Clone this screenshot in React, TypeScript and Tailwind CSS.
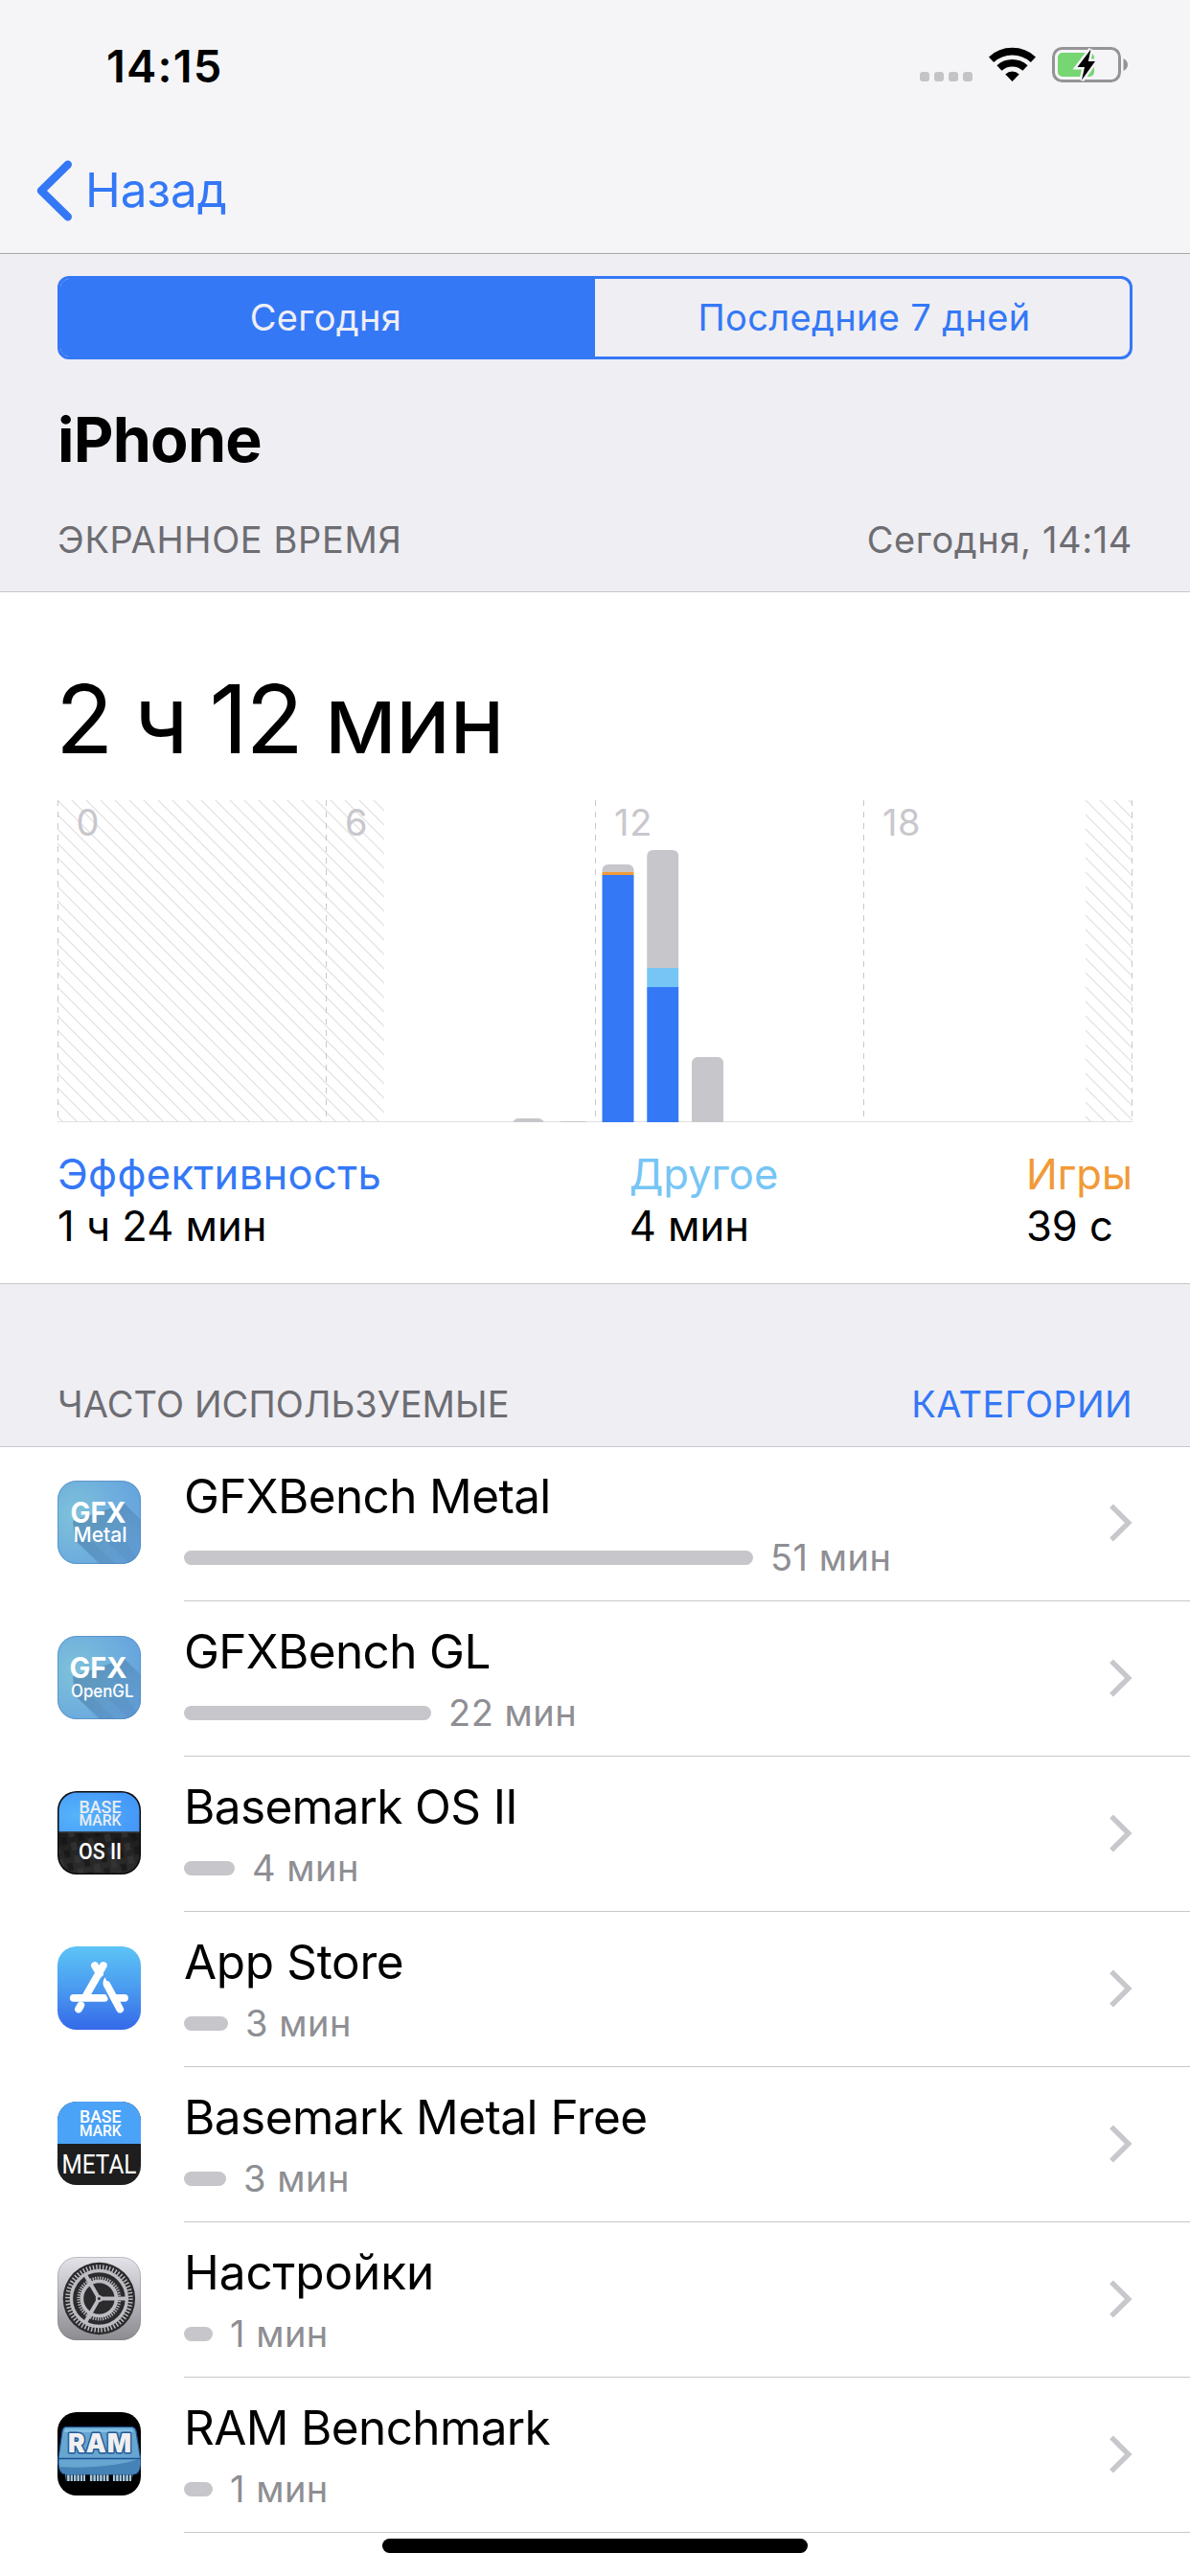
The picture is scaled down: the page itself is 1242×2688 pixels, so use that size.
import type { ReactNode } from 'react'

type AppUsage = {
    name: string
    time: string
    bar: string
    icon: ReactNode
    tracking?: string
}

type Segment = {
    y: number
    height: number
    color: string
}

type HourBar = {
    hour: number
    top: number
    segments: Segment[]
}

const GRAY = '#c7c6cb'
const BLUE = '#3478f6'
const LIGHT_BLUE = '#76c5f5'
const ORANGE = '#f19a37'

const CHART_HEIGHT = 336

const hourBars: HourBar[] = [
    { hour: 10, top: 332, segments: [{ y: 332, height: 4, color: GRAY }] },
    { hour: 11, top: 334.8, segments: [{ y: 334.8, height: 1.2, color: GRAY }] },
    {
        hour: 12,
        top: 67,
        segments: [
            { y: 67, height: 8, color: GRAY },
            { y: 75, height: 3, color: ORANGE },
            { y: 78, height: 258, color: BLUE },
        ],
    },
    {
        hour: 13,
        top: 52,
        segments: [
            { y: 52, height: 123, color: GRAY },
            { y: 175, height: 20, color: LIGHT_BLUE },
            { y: 195, height: 141, color: BLUE },
        ],
    },
    { hour: 14, top: 268, segments: [{ y: 268, height: 68, color: GRAY }] },
]

const categories = [
    { name: 'Эффективность', time: '1 ч 24 мин', color: 'text-[#3478f6]', tracking: 'tracking-[0.32px]' },
    { name: 'Другое', time: '4 мин', color: 'text-[#76c5f5]', tracking: 'tracking-normal' },
    { name: 'Игры', time: '39 с', color: 'text-[#f19a37]', tracking: 'tracking-normal' },
]

function StatusBar() {
    return (
        <div className="flex h-[134px] items-center justify-between pl-[111px] pr-[65px] pt-0.5">
            <span className="text-[47px] font-semibold leading-none tracking-[1.2px]">14:15</span>

            <div className="flex items-center gap-[17px] pb-px">
                <svg width="55" height="37" viewBox="0 0 55 37" fill="#c4c4c6">
                    <rect x="0" y="26" width="10" height="10" rx="3" />
                    <rect x="15" y="26" width="10" height="10" rx="3" />
                    <rect x="30" y="26" width="10" height="10" rx="3" />
                    <rect x="45" y="26" width="10" height="10" rx="3" />
                </svg>

                <svg width="49" height="37" viewBox="0 0 49 37" fill="none" stroke="#000" strokeWidth="7.6">
                    <path d="M2.6 13.2A32.2 32.2 0 0 1 46.4 13.2" />
                    <path d="M11 22A19.8 19.8 0 0 1 38 22" />
                    <path d="M24.5 36L17.3 28.6Q20.5 25.4 24.5 25.4T31.7 28.6Z" fill="#000" stroke="none" />
                </svg>

                <svg width="79" height="37" viewBox="0 0 79 37">
                    <rect x="1.5" y="1.5" width="69" height="34" rx="9" fill="none" stroke="#949496" strokeWidth="3" />
                    <rect x="6" y="6" width="38" height="25" rx="5" fill="#76d672" />
                    <path d="M74.5 12Q79 14.5 79 18.5T74.5 25Z" fill="#949496" />
                    <path
                        d="M40.5 2.5L26.5 21H34L31 34.5L45 15H37.8Z"
                        fill="#000"
                        stroke="#f5f5f7"
                        strokeWidth="5"
                        paintOrder="stroke"
                    />
                </svg>
            </div>
        </div>
    )
}

function NavBar() {
    return (
        <div className="flex h-[130px] items-center gap-[12px] pb-0.5 pl-[38px] text-[#3478f6]">
            <svg
                className="mt-px"
                width="39"
                height="64"
                viewBox="0 0 39 64"
                fill="none"
                stroke="currentColor"
                strokeWidth="8.4"
                strokeLinecap="round"
                strokeLinejoin="round"
            >
                <path d="M32.8 4.7L5 32L32.8 59.3" />
            </svg>
            <span className="text-[49.5px] leading-[60px]">Назад</span>
        </div>
    )
}

function Tabs() {
    return (
        <div className="flex h-[87px] overflow-hidden rounded-[12px] border-[3px] border-[#3478f6] text-[38px] tracking-[0.35px]">
            <div className="flex w-[558px] items-center justify-center bg-[#3478f6] pr-1 text-[#efeef3]">Сегодня</div>
            <div className="flex flex-1 items-center justify-center pl-1 text-[#3478f6]">Последние 7 дней</div>
        </div>
    )
}

function UsageChart() {
    return (
        <svg className="mt-[25px] block" width="1122" height={CHART_HEIGHT} viewBox={`0 0 1122 ${CHART_HEIGHT}`}>
            <defs>
                <pattern id="hatch" width="15" height="15" patternUnits="userSpaceOnUse">
                    <path d="M-2 -2L17 17M-2 13L2 17M13 -2L17 2" stroke="#dfdfe2" strokeWidth="1.2" />
                </pattern>
                {hourBars.map(({ hour, top }) => (
                    <clipPath key={hour} id={`bar-${hour}`}>
                        <rect x={7.5 + hour * 46.75} y={top} width="33" height={CHART_HEIGHT - top + 12} rx="6" />
                    </clipPath>
                ))}
            </defs>

            <rect width="341" height="335" fill="url(#hatch)" />
            <g transform="translate(1073 0)">
                <rect width="49" height="335" fill="url(#hatch)" />
            </g>

            <rect y="335" width="1122" height="1" fill="#e0e0e3" />

            <g stroke="#c8c7cc" strokeDasharray="6 6">
                {[0.5, 280.5, 561.5, 841.5, 1121.5].map((x) => (
                    <line key={x} x1={x} y1="0" x2={x} y2="332" />
                ))}
            </g>

            <g fill="#c8c7cc" fontSize="38">
                <text x="19.5" y="37">0</text>
                <text x="300" y="37">6</text>
                <text x="581" y="37" letterSpacing="0.8">12</text>
                <text x="861" y="37" letterSpacing="0.5">18</text>
            </g>

            {hourBars.map(({ hour, segments }) => (
                <g key={hour} clipPath={`url(#bar-${hour})`}>
                    {segments.map(({ y, height, color }) => (
                        <rect key={y} x={6 + hour * 46.75} y={y} width="35" height={height} fill={color} />
                    ))}
                </g>
            ))}
        </svg>
    )
}

function GfxIcon({ label, size, x, length, titleX, titleLength }: {
    label: string
    size: number
    x: number
    length: number
    titleX: number
    titleLength: number
}) {
    const id = `gfx-${label}`

    return (
        <svg width="87" height="87" viewBox="0 0 87 87">
            <defs>
                <radialGradient id={id} cx="0.22" cy="0.42" r="0.85">
                    <stop offset="0" stopColor="#7fc2d9" />
                    <stop offset="0.5" stopColor="#71b1dd" />
                    <stop offset="1" stopColor="#65a3de" />
                </radialGradient>
                <clipPath id={`${id}-clip`}>
                    <rect width="87" height="87" rx="20" />
                </clipPath>
                <linearGradient id={`${id}-shade`} x1="0.2" y1="0.2" x2="0.9" y2="0.9">
                    <stop offset="0" stopColor="#3f6f9c" stopOpacity="0.5" />
                    <stop offset="1" stopColor="#3f6f9c" stopOpacity="0.1" />
                </linearGradient>
            </defs>
            <g clipPath={`url(#${id}-clip)`}>
                <rect width="87" height="87" fill={`url(#${id})`} />
                <path d="M16 42L70 24L90 44V90H48L18 62Z" fill={`url(#${id}-shade)`} />
                <path d="M18 62L46 90H64L34 62ZM52 64L78 90H90L70 62Z" fill="#3f6f9c" opacity="0.12" />
            </g>
            <rect x="0.5" y="0.5" width="86" height="86" rx="19.5" fill="none" stroke="#4f86b8" opacity="0.6" />
            <g fill="#fff">
                <text x={titleX} y="43.5" fontSize="30" fontWeight="700" textLength={titleLength} lengthAdjust="spacingAndGlyphs">GFX</text>
                <text x={x} y="64.3" fontSize={size} fontWeight="500" textLength={length} lengthAdjust="spacingAndGlyphs">{label}</text>
            </g>
        </svg>
    )
}

function BasemarkOsIcon() {
    return (
        <svg width="87" height="87" viewBox="0 0 87 87" fontFamily="Roboto">
            <defs>
                <clipPath id="os-clip">
                    <rect width="87" height="87" rx="20" />
                </clipPath>
                <clipPath id="os-inner">
                    <rect x="1.5" y="1.5" width="84" height="84" rx="18.5" />
                </clipPath>
                <radialGradient id="os-blue" cx="0.25" cy="0.6" r="0.8">
                    <stop offset="0" stopColor="#56b4fa" />
                    <stop offset="1" stopColor="#4496f8" />
                </radialGradient>
                <linearGradient id="os-dark" x1="0" y1="0" x2="0" y2="1">
                    <stop offset="0" stopColor="#1b1b1b" />
                    <stop offset="1" stopColor="#2e2e2e" />
                </linearGradient>
                <pattern id="carbon" width="18" height="14" patternUnits="userSpaceOnUse" patternTransform="rotate(-14)">
                    <rect width="6" height="8" fill="#3c3c3c" />
                    <rect x="9" y="6" width="6" height="8" fill="#101010" />
                </pattern>
            </defs>
            <g clipPath="url(#os-clip)">
                <rect width="87" height="87" fill="#0a0a0a" />
                <g clipPath="url(#os-inner)">
                    <rect width="87" height="42" fill="url(#os-blue)" />
                    <rect y="42" width="87" height="45" fill="url(#os-dark)" />
                    <rect y="42" width="87" height="45" fill="url(#carbon)" opacity="0.55" />
                    <rect y="42" width="87" height="1.5" fill="#3a3f46" />
                </g>
            </g>
            <g fill="#e9edf2">
                <text x="22.5" y="22.5" fontSize="18" fontWeight="500" textLength="44" lengthAdjust="spacingAndGlyphs">BASE</text>
                <text x="22.5" y="36.3" fontSize="16.5" fontWeight="500" textLength="44" lengthAdjust="spacingAndGlyphs">MARK</text>
                <text x="22" y="71" fontSize="24.5" fontWeight="500" textLength="45" lengthAdjust="spacingAndGlyphs" fill="#fff">OS II</text>
            </g>
        </svg>
    )
}

function BasemarkMetalIcon() {
    return (
        <svg width="87" height="87" viewBox="0 0 87 87" fontFamily="Roboto" fill="#fff">
            <clipPath id="metal-clip">
                <rect width="87" height="87" rx="20" />
            </clipPath>
            <g clipPath="url(#metal-clip)">
                <rect width="87" height="87" fill="#1e1e1e" />
                <rect width="87" height="44" fill="#4ba3f8" />
            </g>
            <text x="23" y="22" fontSize="17.5" fontWeight="500" textLength="43.5" lengthAdjust="spacingAndGlyphs">BASE</text>
            <text x="23" y="35.8" fontSize="16.5" fontWeight="500" textLength="43.5" lengthAdjust="spacingAndGlyphs">MARK</text>
            <text x="4.5" y="75" fontSize="27" textLength="78" lengthAdjust="spacingAndGlyphs">METAL</text>
        </svg>
    )
}

function AppStoreIcon() {
    return (
        <svg width="87" height="87" viewBox="0 0 87 87">
            <defs>
                <linearGradient id="store" x1="0" y1="0" x2="0" y2="1">
                    <stop offset="0" stopColor="#5dc4f6" />
                    <stop offset="0.5" stopColor="#4a9bf0" />
                    <stop offset="1" stopColor="#3569e9" />
                </linearGradient>
            </defs>
            <rect width="87" height="87" rx="20" fill="url(#store)" />
            <g stroke="#fff" strokeWidth="7.8" strokeLinecap="round" fill="none">
                <path d="M47.8 20L29.5 52" />
                <path d="M39 20L44 28.5" />
                <path d="M16.8 53.8H49" />
                <path d="M24.3 61.5L22 65.5" />
                <path d="M51.5 40L65.2 65.5" />
                <path d="M61 53.8H70" />
            </g>
            <path d="M48.8 31Q44.5 36.5 48.5 43L55 43Z" fill="#fff" />
            <path d="M49.5 30.5Q44.8 37 47.6 42.6L53.5 54" fill="none" stroke="#4a9bf0" strokeWidth="1.8" />
        </svg>
    )
}

function SettingsIcon() {
    return (
        <svg width="87" height="87" viewBox="0 0 87 87">
            <defs>
                <linearGradient id="steel" x1="0" y1="0" x2="0" y2="1">
                    <stop offset="0" stopColor="#e4e3e9" />
                    <stop offset="1" stopColor="#8c8b90" />
                </linearGradient>
            </defs>
            <rect width="87" height="87" rx="20" fill="url(#steel)" />
            <rect x="0.5" y="0.5" width="86" height="86" rx="19.5" fill="none" stroke="#77767b" opacity="0.35" />
            <g transform="translate(43.4 43.5)" fill="none">
                <circle r="37.7" fill="#2b2b2d" />
                <circle r="32.8" stroke="#bdbcc1" strokeWidth="5" strokeDasharray="1.45 1.984" />
                <circle r="29" stroke="#bdbcc1" strokeWidth="3.4" />
                <circle r="20.3" stroke="#bdbcc1" strokeWidth="5.4" strokeDasharray="1.2 1.257" />
                <circle r="18" stroke="#bdbcc1" strokeWidth="3.6" />
                <g stroke="#bdbcc1" strokeWidth="4">
                    <path d="M0 0H29" />
                    <path d="M0 0H29" transform="rotate(120)" />
                    <path d="M0 0H29" transform="rotate(240)" />
                </g>
                <circle r="3.6" fill="#bdbcc1" />
                <circle r="1.5" fill="#2b2b2d" />
            </g>
        </svg>
    )
}

function RamIcon() {
    return (
        <svg width="87" height="87" viewBox="0 0 87 87">
            <defs>
                <clipPath id="ram-clip">
                    <rect width="87" height="87" rx="20" />
                </clipPath>
                <pattern id="pins" width="3.4" height="8" patternUnits="userSpaceOnUse">
                    <rect width="2.4" height="8" fill="#a9cfe8" />
                </pattern>
            </defs>
            <g clipPath="url(#ram-clip)">
                <rect width="87" height="87" fill="#000" />
                <path d="M8 64H29V72H9ZM33 64H54V72H33ZM58 64H79L77 72H58Z" fill="url(#pins)" />
                <path d="M9 15.5H77Q81 15.5 82 20L86.5 48V54Q86 65 79 65H9Q2 65 1 54V48L5 20Q6 15.5 9 15.5Z" fill="#67a6d1" stroke="#1f5290" strokeWidth="1.2" />
                <path d="M2 57Q50 60 85.5 49V54Q85 64 79 64.3H9Q3 64 2 57Z" fill="#4582b6" />
                <path d="M8 17.5H78L79 21H7Z" fill="#84bfe3" />
                <path d="M1 48.5H86" stroke="#1f5290" strokeWidth="1.3" />
            </g>
            <text
                x="11"
                y="41.5"
                fontSize="26.5"
                fontWeight="900"
                textLength="66"
                fill="#f0f0f0"
                stroke="#225a98"
                strokeWidth="3"
                strokeLinejoin="round"
                paintOrder="stroke"
            >
                RAM
            </text>
        </svg>
    )
}

const apps: AppUsage[] = [
    {
        name: 'GFXBench Metal',
        time: '51 мин',
        bar: 'w-[594px]',
        icon: <GfxIcon label="Metal" size={21.5} x={16.5} length={56} titleX={13.5} titleLength={58} />,
    },
    {
        name: 'GFXBench GL',
        time: '22 мин',
        bar: 'w-[258px]',
        icon: <GfxIcon label="OpenGL" size={18} x={14} length={65.5} titleX={12.5} titleLength={60} />,
    },
    { name: 'Basemark OS II', time: '4 мин', bar: 'w-[53px]', icon: <BasemarkOsIcon /> },
    { name: 'App Store', time: '3 мин', bar: 'w-[46px]', icon: <AppStoreIcon />, tracking: 'tracking-[-0.35px]' },
    { name: 'Basemark Metal Free', time: '3 мин', bar: 'w-[44px]', icon: <BasemarkMetalIcon />, tracking: 'tracking-[-0.54px]' },
    { name: 'Настройки', time: '1 мин', bar: 'w-[30px]', icon: <SettingsIcon />, tracking: 'tracking-[-0.1px]' },
    { name: 'RAM Benchmark', time: '1 мин', bar: 'w-[30px]', icon: <RamIcon /> },
]

function AppRow({ name, time, bar, icon, tracking = 'tracking-[-0.64px]' }: AppUsage) {
    return (
        <li className="flex h-[162px] pl-[60px] first:-mt-px">
            <div className="w-[132px] shrink-0 pt-[36px]">{icon}</div>

            <div className="flex flex-1 items-center justify-between border-b border-[#c8c7cc] pr-[60px]">
                <div className="h-full pt-[22px]">
                    <div className={`text-[49.5px] leading-[60px] ${tracking}`}>{name}</div>
                    <div className="mt-3 flex h-[45px] items-center gap-[18px]">
                        <div className={`h-[15px] rounded-full bg-[#c7c6cb] ${bar}`} />
                        <span className="text-[38px] leading-[45px] tracking-[0.5px] text-[#8e8e93]">{time}</span>
                    </div>
                </div>

                <svg className="mb-0.5" width="24" height="40" viewBox="0 0 24 40" fill="none" stroke="#c7c7cc" strokeWidth="5.4">
                    <path d="M2 2.3L19.8 20L2 37.7" />
                </svg>
            </div>
        </li>
    )
}

export default function App() {
    return (
        <div className="h-[2688px] w-[1242px] overflow-hidden bg-white font-[Inter,sans-serif] text-black">
            <header className="border-b border-[#a8a8ab] bg-[#f5f5f7]">
                <StatusBar />
                <NavBar />
            </header>

            <section className="bg-[#efeef3] px-[60px] pb-[29px] pt-[23px]">
                <Tabs />
                <h1 className="mt-[44px] text-[64.5px] font-bold leading-[81px] tracking-[-0.77px]">iPhone</h1>
                <div className="mt-[38px] flex justify-between text-[38px] leading-[50px] tracking-[0.62px] text-[#6d6d72]">
                    <span>ЭКРАННОЕ ВРЕМЯ</span>
                    <span>Сегодня, 14:14</span>
                </div>
            </section>

            <section className="border-y border-[#c8c7cc] px-[60px] pb-[33px] pt-[72px]">
                <div className="-ml-0.5 text-[99px] leading-[120px] tracking-[-2.2px] [word-spacing:-2px]">2 ч 12 мин</div>
                <UsageChart />

                <div className="mt-[27px] flex justify-between text-[43.5px] leading-[54px]">
                    {categories.map(({ name, time, color, tracking }) => (
                        <div key={name}>
                            <div className={`${color} ${tracking}`}>{name}</div>
                            <div>{time}</div>
                        </div>
                    ))}
                </div>
            </section>

            <section className="flex justify-between bg-[#efeef3] px-[60px] pb-[19px] pt-[100px] text-[38px] leading-[50px]">
                <span className="tracking-[0.08px] text-[#6d6d72]">ЧАСТО ИСПОЛЬЗУЕМЫЕ</span>
                <span className="tracking-[0.37px] text-[#3478f6]">КАТЕГОРИИ</span>
            </section>

            <ul className="border-t border-[#c8c7cc]">
                {apps.map((app) => <AppRow key={app.name} {...app} />)}
            </ul>

            <div className="mx-auto mt-1.5 h-[15px] w-[444px] rounded-full bg-black" />
        </div>
    )
}
